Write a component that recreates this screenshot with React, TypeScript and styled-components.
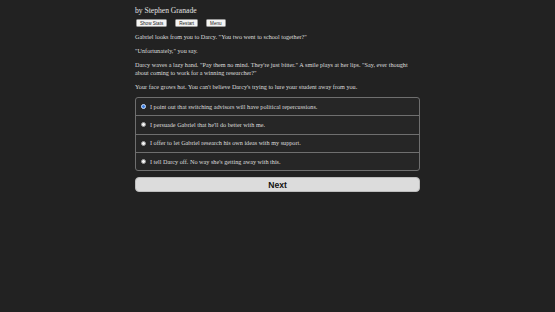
import React, { useState } from 'react';
import styled, { createGlobalStyle } from 'styled-components';

const GlobalStyle = createGlobalStyle`
  html, body {
    margin: 0;
    padding: 0;
    background: #222222;
  }
  body {
    font-family: 'Liberation Serif', 'Times New Roman', serif;
    color: #dddddd;
  }
`;

const Page = styled.div`
  width: 285px;
  margin: 0 auto;
  padding-top: 6px;
  font-size: 6.2px;
  line-height: 8px;
`;

const Author = styled.div`
  font-size: 7.6px;
  line-height: 9px;
  color: #e2e2e2;
`;

const Toolbar = styled.div`
  display: flex;
  gap: 8px;
  margin: 4px 0 6px 1px;
`;

const SmallButton = styled.button`
  background: #f4f4f4;
  color: #222;
  border: 1px solid #999;
  border-radius: 1.5px;
  font-family: 'Liberation Sans', Arial, sans-serif;
  font-size: 4.6px;
  line-height: 5px;
  padding: 0.5px 3px;
  cursor: pointer;
`;

const Para = styled.p`
  margin: 0 0 6px;
`;

const Choices = styled.div`
  margin-top: 5px;
  border: 1px solid #6f6f6f;
  border-radius: 3px;
  overflow: hidden;
  background: #262626;
`;

const Choice = styled.label<{ $first?: boolean }>`
  display: flex;
  align-items: center;
  height: 17.3px;
  padding: 0 5px;
  border-top: ${({ $first }) => ($first ? 'none' : '1px solid #6f6f6f')};
  cursor: pointer;
`;

const Radio = styled.span<{ $checked: boolean }>`
  width: 5px;
  height: 5px;
  border-radius: 50%;
  margin-right: 4px;
  flex-shrink: 0;
  box-sizing: border-box;
  background: ${({ $checked }) => ($checked ? '#3b7de0' : '#f6f6f6')};
  border: ${({ $checked }) => ($checked ? '1.3px solid #cfe0fb' : '0.5px solid #999')};
`;

const NextButton = styled.button`
  display: block;
  width: 100%;
  height: 15px;
  margin-top: 6px;
  background: #dcdcdc;
  color: #111;
  border: 1px solid #bdbdbd;
  border-radius: 4px;
  font-family: 'Liberation Sans', Arial, sans-serif;
  font-weight: bold;
  font-size: 8.6px;
  cursor: pointer;
`;

const options = [
  'I point out that switching advisors will have political repercussions.',
  "I persuade Gabriel that he'll do better with me.",
  'I offer to let Gabriel research his own ideas with my support.',
  "I tell Darcy off. No way she's getting away with this.",
];

const App: React.FC = () => {
  const [selected, setSelected] = useState(0);

  return (
    <>
      <GlobalStyle />
      <Page>
        <Author>by Stephen Granade</Author>
        <Toolbar>
          <SmallButton>Show Stats</SmallButton>
          <SmallButton>Restart</SmallButton>
          <SmallButton>Menu</SmallButton>
        </Toolbar>
        <Para>Gabriel looks from you to Darcy. "You two went to school together?"</Para>
        <Para>"Unfortunately," you say.</Para>
        <Para>
          Darcy waves a lazy hand. "Pay them no mind. They're just bitter." A smile plays at her
          lips. "Say, ever thought about coming to work for a winning researcher?"
        </Para>
        <Para>Your face grows hot. You can't believe Darcy's trying to lure your student away from you.</Para>
        <Choices>
          {options.map((text, i) => (
            <Choice key={i} $first={i === 0} onClick={() => setSelected(i)}>
              <Radio $checked={selected === i} />
              {text}
            </Choice>
          ))}
        </Choices>
        <NextButton>Next</NextButton>
      </Page>
    </>
  );
};

export default App;
